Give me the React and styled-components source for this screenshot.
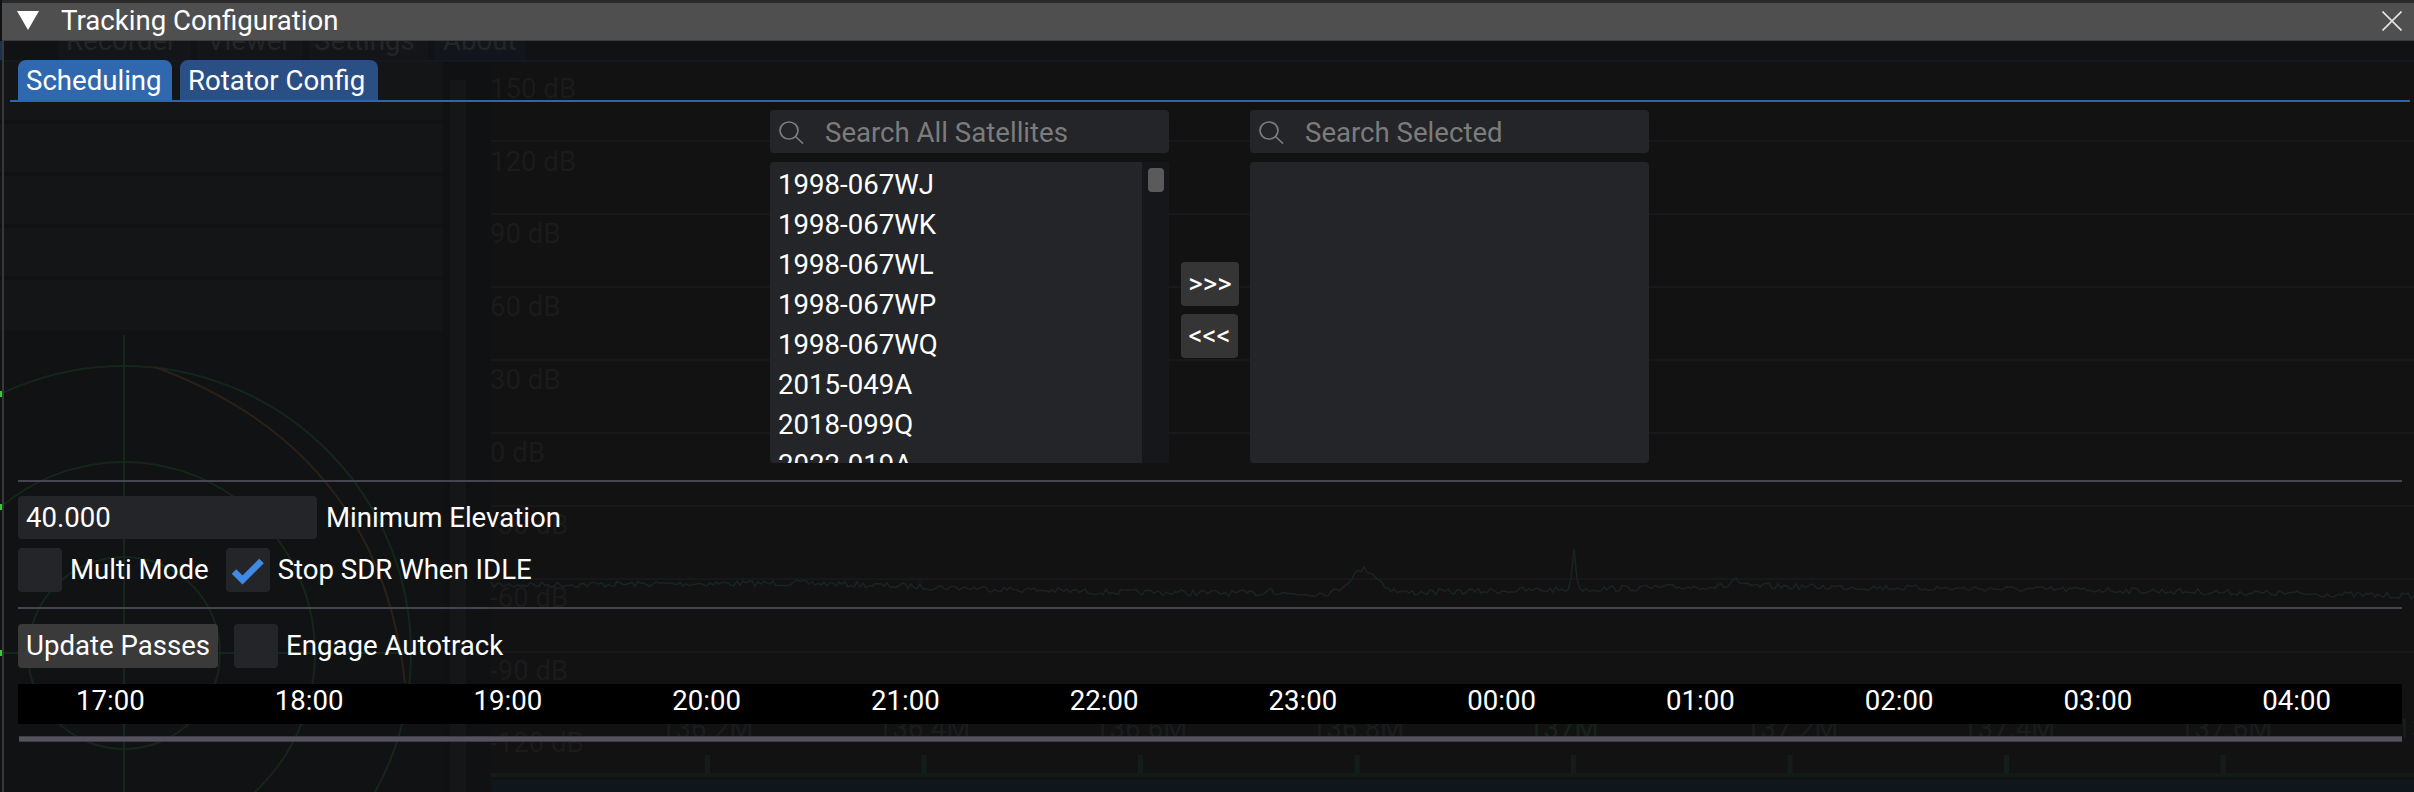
import React from "react";
import styled, { createGlobalStyle } from "styled-components";

const GlobalStyle = createGlobalStyle`
  html, body {
    margin: 0;
    padding: 0;
    background: #111213;
    overflow: hidden;
  }
  * {
    box-sizing: border-box;
  }
`;

const Page = styled.div`
  position: relative;
  width: 2414px;
  height: 792px;
  overflow: hidden;
  background: #111213;
  color: #fff;
  font-family: Roboto, "Liberation Sans", sans-serif;
  font-size: 27.6px;
  line-height: 32px;
`;

const Backdrop = styled.svg`
  position: absolute;
  left: 0;
  top: 0;
  font-family: Roboto, "Liberation Sans", sans-serif;
  font-size: 27.6px;
`;

const Window = styled.div`
  position: relative;
  display: flex;
  flex-direction: column;
  height: 792px;
  margin-left: 2px;
`;

const TitleBar = styled.div`
  display: flex;
  align-items: center;
  flex: none;
  height: 41px;
  padding: 0 12px 2px 15px;
  background: #4f4f4f;
  border-top: 3px solid #28292b;
  border-bottom: 1px solid #3c3c3c;
`;

const TitleText = styled.span`
  flex: 1;
  margin-left: 22px;
`;

const Content = styled.div`
  flex: 1;
  display: flex;
  flex-direction: column;
  padding: 19px 12px 0 14px;
  border-left: 2px solid #38383b;
`;

const TabBar = styled.div`
  display: flex;
  gap: 8px;
  margin: 0 -8px;
  padding-left: 8px;
  border-bottom: 2px solid #3065ac;
`;

const Tab = styled.div`
  width: ${props => props.$w}px;
  height: 40px;
  padding: 5px 0 0 8px;
  border-radius: 8px 8px 0 0;
  background: ${props => (props.$active ? "#3068b0" : "#2a4f85")};
`;

const Selector = styled.div`
  display: grid;
  grid-template-columns: 399px 81px 399px;
  grid-template-rows: 43px 301px;
  row-gap: 9px;
  margin: 8px 0 0 752px;
`;

const SearchBox = styled.div`
  display: flex;
  align-items: center;
  gap: 20px;
  padding: 2px 0 0 9px;
  border-radius: 4px;
  background: #232528;
  color: #7c7c7c;
  grid-column: ${props => props.$col};
`;

const ListBox = styled.div`
  display: flex;
  overflow: hidden;
  border-radius: 4px;
  background: #232528;
  grid-column: ${props => props.$col};
`;

const Rows = styled.div`
  flex: 1;
  padding: 3px 0 0 8px;
`;

const Row = styled.div`
  height: 40px;
  line-height: 40px;
`;

const ScrollTrack = styled.div`
  flex: none;
  width: 27px;
  padding: 6px 5px 0 6px;
  background: #15171a;
`;

const ScrollThumb = styled.div`
  height: 24px;
  border-radius: 4px;
  background: #5a5a5a;
`;

const ArrowColumn = styled.div`
  display: flex;
  flex-direction: column;
  align-items: flex-start;
  gap: 8px;
  grid-column: 2;
  padding: 100px 0 0 12px;
`;

const ArrowButton = styled.div`
  width: ${props => props.$w}px;
  height: 44px;
  line-height: 44px;
  text-align: center;
  border-radius: 4px;
  background: #353535;
`;

const Divider = styled.div`
  height: 2px;
  margin: ${props => props.$margin};
  background: #45444f;
`;

const ControlRow = styled.div`
  display: flex;
  align-items: center;
  margin-top: ${props => props.$top}px;
`;

const NumberInput = styled.div`
  width: 299px;
  height: 43px;
  line-height: 43px;
  padding-left: 8px;
  border-radius: 4px;
  background: #232528;
`;

const Label = styled.span`
  margin-left: ${props => props.$left}px;
`;

const CheckBox = styled.div`
  flex: none;
  width: 44px;
  height: 44px;
  margin-left: ${props => props.$left || 0}px;
  border-radius: 4px;
  background: #232528;
`;

const Button = styled.div`
  width: 200px;
  height: 44px;
  line-height: 44px;
  padding-left: 8px;
  border-radius: 4px;
  background: #3a3a3a;
`;

const TimeBar = styled.div`
  display: grid;
  grid-template-columns: repeat(12, 198.75px);
  height: 40px;
  margin-top: 16px;
  padding-left: 58px;
  background: #000;
`;

const TimeLabel = styled.span`
  line-height: 34px;
  white-space: nowrap;
`;

const Slider = styled.div`
  height: 6px;
  margin: 12px 0 0 1px;
  background: #55525e;
  border-top: 1px solid #3e3c46;
  border-bottom: 1px solid #3e3c46;
`;

const satellites = [
  "1998-067WJ",
  "1998-067WK",
  "1998-067WL",
  "1998-067WP",
  "1998-067WQ",
  "2015-049A",
  "2018-099Q",
  "2022-019A"
];

const hours = ["17:00", "18:00", "19:00", "20:00", "21:00", "22:00", "23:00", "00:00", "01:00", "02:00", "03:00", "04:00"];

const dbLabels = ["150 dB", "120 dB", "90 dB", "60 dB", "30 dB", "0 dB", "-30 dB", "-60 dB", "-90 dB", "-120 dB"];

const freqLabels = ["136.2M", "136.4M", "136.6M", "136.8M", "137M", "137.2M", "137.4M", "137.6M", "13"];

// noise floor of the spectrum behind the window
const traceBase = [
  [491, 585], [800, 583], [1100, 592], [1340, 594], [1740, 586], [2100, 590], [2414, 596]
];

const tracePeaks = [
  { x: 1364, h: 24, w: 14 },
  { x: 1574, h: 38, w: 2 },
  { x: 1270, h: 9, w: 2 },
  { x: 1735, h: 8, w: 3 }
];

const buildTrace = () => {
  let seed = 7;
  const next = () => {
    seed = (seed * 16807) % 2147483647;
    return seed / 2147483647;
  };
  const points = [];
  for (let x = 491; x <= 2414; x += 3) {
    const seg = traceBase.findIndex((p, i) => traceBase[i + 1] && x <= traceBase[i + 1][0]);
    const a = traceBase[seg];
    const b = traceBase[seg + 1];
    let y = a[1] + ((b[1] - a[1]) * (x - a[0])) / (b[0] - a[0]);
    y += (next() - 0.5) * 6;
    tracePeaks.forEach(p => {
      y -= p.h * Math.exp(-((x - p.x) * (x - p.x)) / (2 * p.w * p.w));
    });
    points.push(`${x},${y.toFixed(1)}`);
  }
  return points.join(" ");
};

const trace = buildTrace();

const BackgroundScene = () => (
  <Backdrop width="2414" height="792" viewBox="0 0 2414 792">
    {/* sidebar */}
    <rect x="0" y="60" width="443" height="270" fill="#141516" />
    {[122, 174, 226, 278].map(y => (
      <rect key={y} x="0" y={y - 2} width="443" height="4" fill="#101112" />
    ))}
    <rect x="443" y="40" width="48" height="752" fill="#101112" />
    <rect x="450" y="80" width="16" height="712" fill="#151617" />
    <rect x="491" y="60" width="1923" height="732" fill="#121212" />

    {/* menu tabs */}
    <rect x="0" y="41" width="2" height="19" fill="#1c3050" />
    <rect x="0" y="60" width="2414" height="2" fill="#131920" />
    <rect x="58" y="41" width="133" height="19" fill="#131519" />
    <rect x="197" y="41" width="106" height="19" fill="#131519" />
    <rect x="309" y="41" width="119" height="19" fill="#131519" />
    <rect x="434" y="41" width="91" height="19" fill="#12161c" />
    <g fill="#242526">
      <text x="66" y="50">Recorder</text>
      <text x="207" y="50">Viewer</text>
      <text x="314" y="50">Settings</text>
      <text x="443" y="50">About</text>
    </g>

    {/* polar plot */}
    <g fill="none" stroke="#15261a" strokeWidth="2">
      <circle cx="124" cy="653" r="96" />
      <circle cx="124" cy="653" r="191" />
      <circle cx="124" cy="653" r="287" />
      <path d="M124 335V792M0 653H411" />
    </g>
    <path d="M155 367Q380 450 405 683" fill="none" stroke="#2a2119" strokeWidth="2" />
    <g fill="#2fd02f">
      <rect x="0" y="391" width="2" height="6" />
      <rect x="0" y="504" width="2" height="6" />
      <rect x="0" y="650" width="2" height="6" />
    </g>

    {/* spectrum */}
    {[0, 1, 2, 3, 4, 5, 6, 7].map(i => (
      <rect key={i} x="491" y={140 + i * 73} width="1923" height="2" fill="#171819" />
    ))}
    {dbLabels.map((label, i) => (
      <text key={label} x="490" y={98 + i * 72.7} fill="#1a1b1c">
        {label}
      </text>
    ))}
    <polyline points={trace} fill="none" stroke="#1a2424" strokeWidth="1.5" />
    {freqLabels.map((label, i) => (
      <text key={label} x={660 + i * 217} y="738" fill={label === "137M" ? "#16241a" : "#191d1e"}>
        {label}
      </text>
    ))}
    {[0, 1, 2, 3, 4, 5, 6, 7].map(i => (
      <rect key={i} x={705 + i * 216.5} y="755" width="5" height="19" fill="#141c1c" />
    ))}
    <rect x="491" y="773" width="1923" height="4" fill="#131a1a" />
    <rect x="491" y="780" width="1923" height="12" fill="#0f161c" />
  </Backdrop>
);

const CollapseArrow = () => (
  <svg width="22" height="19" viewBox="0 0 22 19">
    <polygon points="0,0 22,0 11,19" fill="#fff" />
  </svg>
);

const CloseIcon = () => (
  <svg width="20" height="20" viewBox="0 0 20 20">
    <path d="M0.5 0.5L19.5 19.5M19.5 0.5L0.5 19.5" stroke="#e4e4e4" strokeWidth="1.6" fill="none" />
  </svg>
);

const SearchIcon = () => (
  <svg width="26" height="23" viewBox="0 0 26 23" style={{ flex: "none" }}>
    <ellipse cx="10" cy="9.5" rx="9" ry="8.5" fill="none" stroke="#7c7c7c" strokeWidth="1.7" />
    <path d="M16.5 15.5L24 22.5" stroke="#7c7c7c" strokeWidth="1.7" fill="none" />
  </svg>
);

const CheckMark = () => (
  <svg width="44" height="44" viewBox="0 0 44 44">
    <polyline points="8,23.5 16.5,32 35.5,13" fill="none" stroke="#3f8ae2" strokeWidth="6.5" />
  </svg>
);

const App = () => (
  <Page>
    <GlobalStyle />
    <BackgroundScene />
    <Window>
      <TitleBar>
        <CollapseArrow />
        <TitleText>Tracking Configuration</TitleText>
        <CloseIcon />
      </TitleBar>
      <Content>
        <TabBar>
          <Tab $active $w={154}>Scheduling</Tab>
          <Tab $w={198}>Rotator Config</Tab>
        </TabBar>

        <Selector>
          <SearchBox $col={1}>
            <SearchIcon />
            Search All Satellites
          </SearchBox>
          <SearchBox $col={3}>
            <SearchIcon />
            Search Selected
          </SearchBox>
          <ListBox $col={1}>
            <Rows>
              {satellites.map(name => (
                <Row key={name}>{name}</Row>
              ))}
            </Rows>
            <ScrollTrack>
              <ScrollThumb />
            </ScrollTrack>
          </ListBox>
          <ArrowColumn>
            <ArrowButton $w={58}>&gt;&gt;&gt;</ArrowButton>
            <ArrowButton $w={57}>&lt;&lt;&lt;</ArrowButton>
          </ArrowColumn>
          <ListBox $col={3} />
        </Selector>

        <Divider $margin="17px 0 0" />

        <ControlRow $top={14}>
          <NumberInput>40.000</NumberInput>
          <Label $left={9}>Minimum Elevation</Label>
        </ControlRow>

        <ControlRow $top={9}>
          <CheckBox />
          <Label $left={8}>Multi Mode</Label>
          <CheckBox $left={17}>
            <CheckMark />
          </CheckBox>
          <Label $left={8}>Stop SDR When IDLE</Label>
        </ControlRow>

        <Divider $margin="15px 0 0" />

        <ControlRow $top={15}>
          <Button>Update Passes</Button>
          <CheckBox $left={16} />
          <Label $left={8}>Engage Autotrack</Label>
        </ControlRow>

        <TimeBar>
          {hours.map(hour => (
            <TimeLabel key={hour}>{hour}</TimeLabel>
          ))}
        </TimeBar>
        <Slider />
      </Content>
    </Window>
  </Page>
);

export default App;
